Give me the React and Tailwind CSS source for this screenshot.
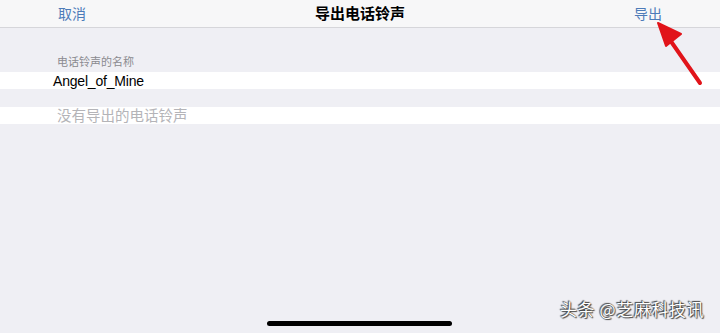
import React from 'react'

const font = { fontFamily: '"Noto Sans CJK SC", "Noto Sans", sans-serif' }
const latin = { fontFamily: '"Liberation Sans", "Noto Sans CJK SC", sans-serif' }

export default function App() {
  return (
    <div className="relative w-[720px] h-[333px] overflow-hidden bg-[#efeff4]" style={font}>
      {/* Nav bar */}
      <div className="h-[28px] bg-[#f7f7f8] border-b border-[#d6d6da] flex items-center justify-between px-[58px] pb-[2px]">
        <span className="text-[14px] leading-none text-[#4d7bb8]">取消</span>
        <span className="text-[15px] leading-none font-semibold text-black">导出电话铃声</span>
        <span className="text-[14px] leading-none text-[#4d7bb8]">导出</span>
      </div>

      {/* Section label */}
      <div className="pt-[25px] pl-[57px] text-[11px] leading-[17px] text-[#8a8a8f]">电话铃声的名称</div>

      {/* Name row */}
      <div className="mt-[2px] h-[17px] bg-white flex items-center pl-[53px]">
        <span className="text-[14px] leading-none text-black tracking-[-0.2px]" style={latin}>Angel_of_Mine</span>
      </div>

      {/* Empty list row */}
      <div className="mt-[18px] h-[17px] bg-white flex items-center pl-[57px]">
        <span className="text-[14.5px] leading-none text-[#b4b4b8]">没有导出的电话铃声</span>
      </div>

      {/* Red arrow annotation */}
      <svg className="absolute left-[640px] top-[16px]" width="80" height="77" viewBox="0 0 80 77">
        <line x1="60" y1="67" x2="30" y2="24" stroke="#e1141a" strokeWidth="4" strokeLinecap="round" />
        <polygon points="18,7 41,18 26,30" fill="#e1141a" stroke="#e1141a" strokeWidth="2" strokeLinejoin="round" />
      </svg>

      {/* Watermark */}
      <div
        className="absolute left-[560px] top-[300px] text-[17px] leading-none text-white tracking-[0.6px]"
        style={{ textShadow: '0 0 1px #333, 1px 1px 1px #444, -1px -1px 1px #444' }}
      >
        头条 @芝麻科技讯
      </div>

      {/* Home indicator */}
      <div className="absolute left-[267px] top-[321px] w-[185px] h-[5px] rounded-full bg-black" />
    </div>
  )
}
